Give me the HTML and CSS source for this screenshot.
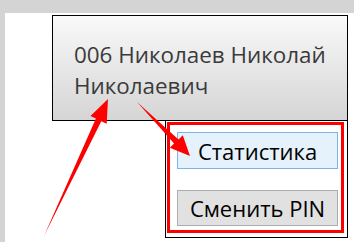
FILE: index.html
```html
<!DOCTYPE html>
<html>
<head>
<meta charset="utf-8">
<link rel="stylesheet" href="styles.css">
</head>
<body>
<div class="frame">
  <div class="canvas">
    <div class="user-btn">
      <span class="user-name">006 Николаев Николай Николаевич</span>
    </div>
    <div class="menu">
      <div class="highlight">
        <button class="menu-btn hover">Статистика</button>
        <button class="menu-btn short">Сменить PIN</button>
      </div>
    </div>
  </div>
  <svg class="arrows" width="354" height="242" viewBox="0 0 354 242">
    <polygon fill="#ff0000" points="44,236 95.9,118.6 90.5,116.1 108,99 106.7,123.7 101.3,121.2"/>
    <polygon fill="#ff0000" points="137,102 174.1,143.6 169.8,147.7 190,156 182.8,135.3 178.5,139.4"/>
  </svg>
</div>
</body>
</html>
```

FILE: styles.css
```css
html, body {
  margin: 0;
  padding: 0;
  width: 354px;
  height: 242px;
  overflow: hidden;
}
.frame {
  position: relative;
  width: 354px;
  height: 242px;
  box-sizing: border-box;
  background: #d4d4d4;
  padding: 13px 0 0 5px;
}
.canvas {
  background: #ffffff;
  height: 229px;
  box-sizing: border-box;
  padding: 2px 0 0 47px;
  display: flex;
  flex-direction: column;
}
.user-btn {
  width: 296px;
  height: 106px;
  box-sizing: border-box;
  border: 1px solid #000;
  background: linear-gradient(#f9f9f9, #d5d5d5);
  padding: 23px 10px 0 21px;
}
.user-name {
  font-family: "Open Sans", "DejaVu Sans", sans-serif;
  font-size: 22.4px;
  line-height: 31px;
  color: #3a3a3a;
}
.menu {
  margin-left: 113px;
  width: 183px;
  height: 117px;
  box-sizing: border-box;
  border: 1px solid #000;
  border-top: none;
  background: #fff;
  padding: 1px 3px 4px 1px;
}
.highlight {
  height: 100%;
  box-sizing: border-box;
  border: 3px solid #ff0000;
  padding: 7px 3px 4px 7px;
  display: flex;
  flex-direction: column;
  gap: 21px;
}
.menu-btn {
  display: block;
  width: 100%;
  height: 37px;
  margin: 0;
  box-sizing: border-box;
  border: 1px solid #adadad;
  background: #e1e1e1;
  font-family: "Open Sans", "DejaVu Sans", sans-serif;
  font-size: 22px;
  color: #000;
  padding: 0;
}
.menu-btn.short {
  height: 36px;
}
.menu-btn.hover {
  background: #e5f1fb;
  border-color: #7eb4ea;
}
.arrows {
  position: absolute;
  left: 0;
  top: 0;
}
```
